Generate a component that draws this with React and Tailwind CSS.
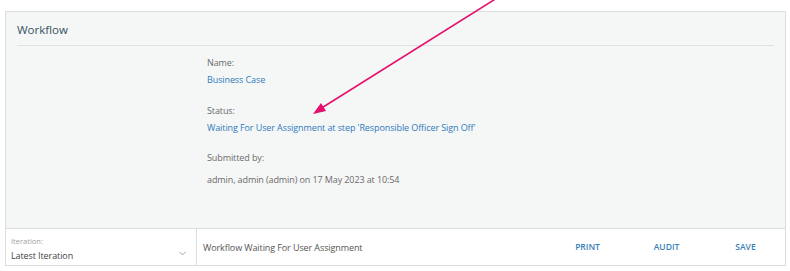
import { ChevronDown } from "lucide-react";

const font = { fontFamily: '"Open Sans", "Noto Sans", sans-serif' };

function Field({ label, value, className = "" }) {
  return (
    <div className={className}>
      <div className="h-[16px] text-[9px] leading-[16px] tracking-[-0.1px] text-[#6b6b6b]">{label}</div>
      {value}
    </div>
  );
}

export default function App() {
  return (
    <div className="relative h-[271px] w-[790px] bg-white px-[5px] pt-[11px]" style={font}>
      <div className="flex h-[255px] w-[781px] flex-col border border-[#dcdddd] bg-[#f5f6f6]">
        <div className="mx-[11px] flex h-[34px] items-end border-b border-[#e0e1e1] pb-[6px]">
          <h2 className="text-[11.5px] leading-[18px] text-[#36535f]">Workflow</h2>
        </div>

        <div className="flex-1 pl-[201px] pt-[9px]">
          <Field
            label="Name:"
            value={
              <div className="mt-[1px] h-[16px] text-[9px] leading-[16px] tracking-[-0.1px] text-[#2f7bbd]">
                Business Case
              </div>
            }
          />
          <Field
            className="mt-[15px]"
            label="Status:"
            value={
              <div className="mt-[1px] h-[16px] text-[9px] leading-[16px] tracking-[-0.1px] text-[#2f7bbd]">
                Waiting For User Assignment at step 'Responsible Officer Sign Off'
              </div>
            }
          />
          <Field
            className="mt-[14px]"
            label="Submitted by:"
            value={
              <div className="mt-[6px] h-[16px] text-[9px] leading-[16px] tracking-[-0.1px] text-[#6b6b6b]">
                admin, admin (admin) on 17 May 2023 at 10:54
              </div>
            }
          />
        </div>

        <div className="flex h-[37px] border-t border-[#dcdddd] bg-white">
          <div className="flex w-[191px] items-end justify-between border-r border-[#dcdddd] pb-[1px] pl-[5px] pr-[8px]">
            <div>
              <div className="text-[7.5px] leading-[12px] text-[#a0a0a0]">Iteration:</div>
              <div className="text-[9px] leading-[17px] tracking-[-0.1px] text-[#444]">Latest Iteration</div>
            </div>
            <ChevronDown className="mb-[5px] h-[11px] w-[11px] text-[#777]" strokeWidth={1.5} />
          </div>
          <div className="flex flex-1 items-center pl-[6px] pt-[1px] text-[9px] tracking-[-0.1px] text-[#555]">
            Workflow Waiting For User Assignment
          </div>
          <div className="flex items-center">
            {["PRINT", "AUDIT", "SAVE"].map((b) => (
              <button key={b} className="w-[79px] text-center text-[8.5px] font-semibold text-[#3a7fb8]">
                {b}
              </button>
            ))}
          </div>
        </div>
      </div>

      <svg className="pointer-events-none absolute left-0 top-0" width="790" height="271">
        <line x1="497" y1="-2" x2="320" y2="109" stroke="#e3116c" strokeWidth="1.6" />
        <polygon points="313,114 321,103 326,111" fill="#e3116c" />
      </svg>
    </div>
  );
}
